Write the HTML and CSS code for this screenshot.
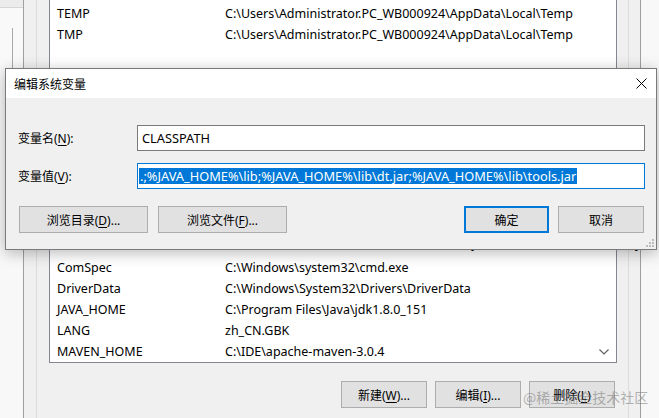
FILE: index.html
```html
<!DOCTYPE html>
<html lang="zh-CN">
<head>
    <meta charset="UTF-8">
    <meta name="viewport" content="width=device-width, initial-scale=1.0">
    <title>编辑系统变量</title>
    <link rel="stylesheet" href="styles.css">
</head>
<body>
    <div class="desk">

        <!-- window further back, only its edge shows -->
        <div class="far-window">
            <div class="far-title">环境变量</div>
            <div class="far-pane"></div>
        </div>

        <!-- environment variables window -->
        <div class="env-window">
            <div class="group">
                <div class="var-list user-vars">
                    <div class="row"><span class="name">TEMP</span><span class="value">C:\Users\Administrator.PC_WB000924\AppData\Local\Temp</span></div>
                    <div class="row"><span class="name">TMP</span><span class="value">C:\Users\Administrator.PC_WB000924\AppData\Local\Temp</span></div>
                </div>

                <div class="var-list sys-vars">
                    <div class="row row-peek"><span class="name">CLASSPATH</span><span class="value">.;%JAVA_HOME%\lib;%JAVA_HOME%\lib\dt.jar;%JAVA_HOME%\lib\tools.jar</span></div>
                    <div class="row"><span class="name">ComSpec</span><span class="value">C:\Windows\system32\cmd.exe</span></div>
                    <div class="row"><span class="name">DriverData</span><span class="value">C:\Windows\System32\Drivers\DriverData</span></div>
                    <div class="row"><span class="name">JAVA_HOME</span><span class="value">C:\Program Files\Java\jdk1.8.0_151</span></div>
                    <div class="row"><span class="name">LANG</span><span class="value">zh_CN.GBK</span></div>
                    <div class="row"><span class="name">MAVEN_HOME</span><span class="value">C:\IDE\apache-maven-3.0.4</span></div>
                    <svg class="scroll-down" width="10" height="6" viewBox="0 0 10 6">
                        <path d="M0.5 0.5 L5 5 L9.5 0.5" fill="none" stroke="#606060" stroke-width="1.2"/>
                    </svg>
                </div>

                <div class="list-buttons">
                    <button class="btn btn-small">新建(<u>W</u>)...</button>
                    <button class="btn btn-small">编辑(<u>I</u>)...</button>
                    <button class="btn btn-small">删除(<u>L</u>)</button>
                </div>
            </div>
        </div>

        <!-- edit dialog -->
        <div class="dialog">
            <div class="dialog-title">
                <span>编辑系统变量</span>
                <svg class="close" width="11" height="11" viewBox="0 0 11 11">
                    <path d="M0.5 0.5 L10.5 10.5 M10.5 0.5 L0.5 10.5" stroke="#000" stroke-width="1"/>
                </svg>
            </div>
            <div class="dialog-body">
                <div class="field-row">
                    <span class="field-label">变量名(<u>N</u>):</span>
                    <div class="field">CLASSPATH</div>
                </div>
                <div class="field-row">
                    <span class="field-label">变量值(<u>V</u>):</span>
                    <div class="field focused"><span class="selected">.;%JAVA_HOME%\lib;%JAVA_HOME%\lib\dt.jar;%JAVA_HOME%\lib\tools.jar</span></div>
                </div>
                <div class="dialog-buttons">
                    <button class="btn btn-wide">浏览目录(<u>D</u>)...</button>
                    <button class="btn btn-wide">浏览文件(<u>F</u>)...</button>
                    <span class="spacer"></span>
                    <button class="btn btn-small default">确定</button>
                    <button class="btn btn-small">取消</button>
                </div>
            </div>
            <svg class="grip" width="9" height="9" viewBox="0 0 9 9">
                <rect x="7" y="1" width="2" height="2" fill="#bdbdbd"/>
                <rect x="4" y="4" width="2" height="2" fill="#bdbdbd"/>
                <rect x="7" y="4" width="2" height="2" fill="#bdbdbd"/>
                <rect x="1" y="7" width="2" height="2" fill="#bdbdbd"/>
                <rect x="4" y="7" width="2" height="2" fill="#bdbdbd"/>
                <rect x="7" y="7" width="2" height="2" fill="#bdbdbd"/>
            </svg>
        </div>

        <div class="watermark">@稀土掘金技术社区</div>
    </div>
</body>
</html>
```

FILE: styles.css
```css
* {
    box-sizing: border-box;
    margin: 0;
    padding: 0;
}

body {
    font-family: "Noto Sans", "Noto Sans CJK SC", sans-serif;
    font-size: 12px;
    color: #000;
    background: #f8f8f8;
    overflow: hidden;
}

.desk {
    position: relative;
    width: 659px;
    height: 418px;
    overflow: hidden;
}

u {
    text-decoration: underline;
    text-underline-offset: 2px;
}

/* far back window */
.far-window {
    position: absolute;
    left: -40px;
    top: -20px;
    width: 63px;
    height: 110px;
    background: #f9f9f9;
}
.far-title {
    height: 28px;
    line-height: 12px;
    padding: 9px 0 0 54px;
    background: #ececec;
    border-bottom: 1px solid #d6d6d6;
    white-space: nowrap;
    overflow: hidden;
}
.far-pane {
    margin: 20px 0 0 0;
    width: 53px;
    height: 40px;
    border-right: 1px solid #a8a8a8;
}

/* environment variables window */
.env-window {
    position: absolute;
    left: 23px;
    top: 0;
    width: 618px;
    height: 440px;
    padding: 0 11px 0 12px;
    background: #f0f0f0;
    border-left: 1px solid #a0a0a0;
    border-right: 1px solid #a0a0a0;
}
.group {
    height: 100%;
    padding: 0 11px 0 12px;
    border-left: 1px solid #dcdcdc;
    border-right: 1px solid #dcdcdc;
}

.var-list {
    position: relative;
    background: #fff;
    border: 1px solid #828790;
}
.user-vars {
    height: 100px;
    padding-top: 3px;
    border-top: none;
}
.sys-vars {
    margin-top: 135px;
}
.row {
    display: flex;
    height: 21px;
    line-height: 21px;
    padding-left: 7px;
    font-size: 12.5px;
    white-space: nowrap;
}
.row-peek {
    line-height: 15px;
}
.name {
    width: 168px;
    flex-shrink: 0;
}
.scroll-down {
    position: absolute;
    right: 7px;
    bottom: 7px;
}

.list-buttons {
    display: flex;
    justify-content: flex-end;
    gap: 8px;
    margin-top: 18px;
    padding-right: 2px;
}

/* buttons */
.btn {
    height: 27px;
    font-family: inherit;
    font-size: 12px;
    color: #000;
    background: #e1e1e1;
    border: 1px solid #adadad;
}
.btn-small {
    width: 86px;
}
.btn-wide {
    width: 129px;
}
.btn.default {
    border: 2px solid #0078d7;
}

/* edit dialog */
.dialog {
    position: absolute;
    left: 5px;
    top: 68px;
    width: 652px;
    height: 182px;
    background: #f0f0f0;
    border: 1px solid #7a7a7a;
    box-shadow: 0 3px 14px rgba(0, 0, 0, 0.28);
}
.dialog-title {
    display: flex;
    align-items: center;
    justify-content: space-between;
    height: 29px;
    padding: 0 9px 0 8px;
    background: #fff;
}
.dialog-body {
    padding: 27px 11px 0 12px;
}
.field-row {
    display: flex;
    align-items: center;
}
.field-row + .field-row {
    margin-top: 12px;
}
.field-label {
    width: 119px;
    flex-shrink: 0;
}
.field {
    flex: 1;
    display: flex;
    align-items: center;
    height: 26px;
    padding-left: 4px;
    font-size: 12.8px;
    background: #fff;
    border: 1px solid #7a7a7a;
    white-space: nowrap;
}
.field.focused {
    padding-left: 1px;
    border-color: #0078d7;
}
.selected {
    display: inline-block;
    height: 16px;
    line-height: 16px;
    padding: 0 1px;
    color: #fff;
    background: #0078d7;
}
.dialog-buttons {
    display: flex;
    gap: 10px;
    margin-top: 17px;
    padding: 0 1px;
}
.dialog-buttons .spacer {
    flex: 1;
}
.dialog-buttons .btn-small {
    width: 85px;
}
.dialog-buttons .btn-small:last-child {
    width: 86px;
    margin-left: -1px;
}
.grip {
    position: absolute;
    right: 2px;
    bottom: 2px;
}

.watermark {
    position: absolute;
    left: 523px;
    top: 387px;
    font-family: "Noto Sans CJK SC", sans-serif;
    font-size: 14px;
    line-height: 20px;
    color: rgba(110, 110, 110, 0.5);
    white-space: nowrap;
}
```
